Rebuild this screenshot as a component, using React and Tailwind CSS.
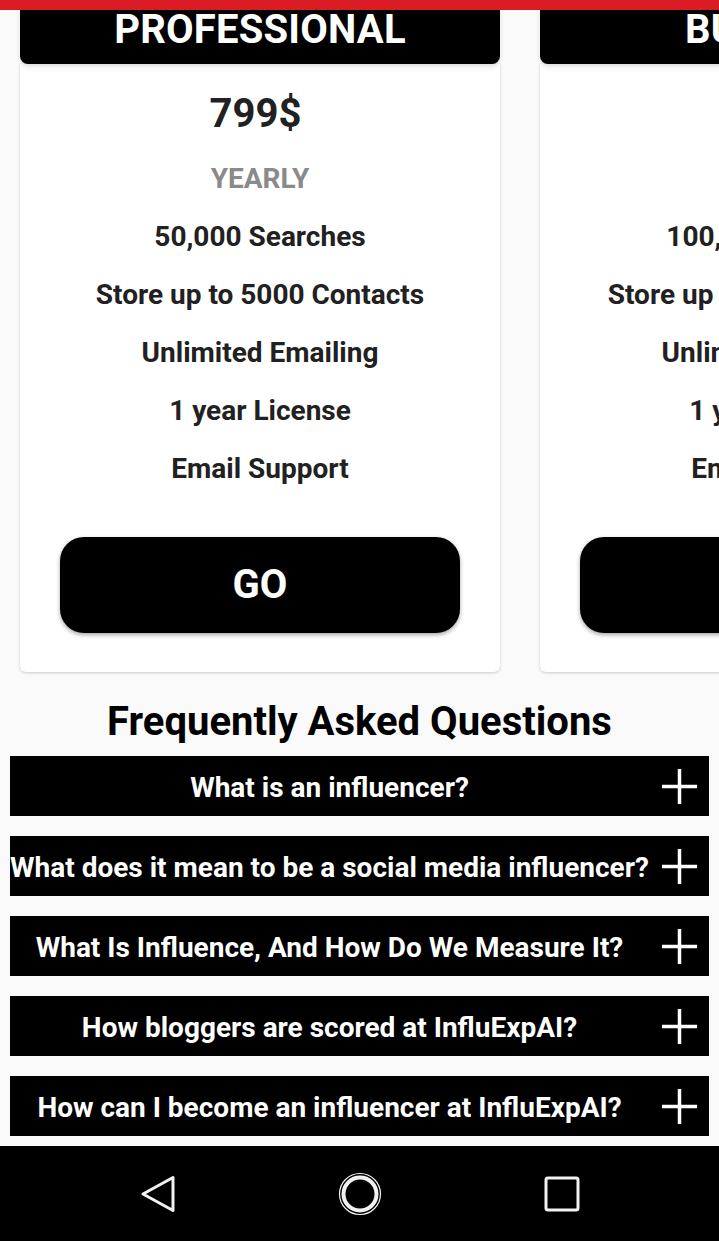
import React from "react";

const plans = [
  {
    name: "PROFESSIONAL",
    price: "799$",
    period: "YEARLY",
    features: ["50,000 Searches", "Store up to 5000 Contacts", "Unlimited Emailing", "1 year License", "Email Support"],
  },
  {
    name: "BUSINESS",
    price: "1499$",
    period: "YEARLY",
    features: ["100,000 Searches", "Store up to 10000 Contacts", "Unlimited Emailing", "1 year License", "Email Support"],
  },
];

const faqs = [
  "What is an influencer?",
  "What does it mean to be a social media influencer?",
  "What Is Influence, And How Do We Measure It?",
  "How bloggers are scored at InfluExpAI?",
  "How can I become an influencer at InfluExpAI?",
];

const PlanCard = ({ plan }) => (
  <div className="w-[480px] shrink-0 flex flex-col">
    {/* header */}
    <div className="h-[68px] bg-black rounded-b-lg flex items-center justify-center shadow-md relative z-10">
      <span className="text-white font-bold text-[40px] leading-none tracking-[0.2px]">{plan.name}</span>
    </div>
    <div className="bg-white rounded-b-md shadow-[0_1px_3px_rgba(0,0,0,0.2)] flex flex-col items-center pt-[26px] pb-[39px]">
      <div className="text-[40px] leading-[48px] font-bold text-[#212121] pr-[9px]">{plan.price}</div>
      <div className="mt-[12px] text-[28px] leading-[58px] font-bold text-[#8a8a8a]">{plan.period}</div>
      {plan.features.map((f) => (
        <div key={f} className="text-[28px] leading-[58px] font-bold text-[#212121] whitespace-nowrap">
          {f}
        </div>
      ))}
      <button className="mt-[39px] w-[400px] h-[96px] rounded-[24px] bg-black text-white font-bold text-[40px] shadow-[0_2px_4px_rgba(0,0,0,0.35)]">
        GO
      </button>
    </div>
  </div>
);

const Plus = () => (
  <svg width="35" height="35" viewBox="0 0 35 35" className="shrink-0 ml-[13px] mr-[12px]">
    <path d="M17.5 0V35M0 17.5H35" stroke="white" strokeWidth="3.5" />
  </svg>
);

export default function App() {
  return (
    <div className="min-h-screen bg-[#fafafa] overflow-hidden" style={{ fontFamily: "Roboto, 'Noto Sans', sans-serif" }}>
      {/* status bar */}
      <div className="fixed top-0 left-0 right-0 h-[10px] bg-[#dc1c24] z-20" />

      <div className="pt-[10px]">
        {/* plans row */}
        <div className="flex gap-[40px] pl-[20px] -mt-[14px] pb-[1px]">
          {plans.map((p) => (
            <PlanCard key={p.name} plan={p} />
          ))}
        </div>

        {/* FAQ */}
        <h2 className="mt-[25px] text-center text-[40px] leading-[48px] font-bold text-black">
          Frequently Asked Questions
        </h2>
        <div className="mt-[10px] mx-[10px] flex flex-col gap-[20px] pb-[105px]">
          {faqs.map((q) => (
            <div key={q} className="h-[60px] bg-black flex items-center">
              <span className="flex-1 min-w-0 pt-[3px] text-center text-white font-bold text-[28px] whitespace-nowrap">{q}</span>
              <Plus />
            </div>
          ))}
        </div>
      </div>

      {/* nav bar */}
      <div className="fixed bottom-0 left-0 right-0 h-[95px] bg-black flex items-center justify-center gap-[160px]">
        <svg width="40" height="40" viewBox="0 0 40 40">
          <path d="M35 3.5V36.5L5 20Z" fill="none" stroke="#f2f2f2" strokeWidth="3" strokeLinejoin="round" />
        </svg>
        <svg width="44" height="44" viewBox="0 0 44 44">
          <circle cx="22" cy="22" r="20.5" fill="none" stroke="#f2f2f2" strokeWidth="1.2" />
          <circle cx="22" cy="22" r="16.5" fill="none" stroke="#f2f2f2" strokeWidth="4" />
        </svg>
        <svg width="40" height="40" viewBox="0 0 40 40">
          <rect x="4" y="4" width="32" height="32" rx="2" fill="none" stroke="#f2f2f2" strokeWidth="3" />
        </svg>
      </div>
    </div>
  );
}
